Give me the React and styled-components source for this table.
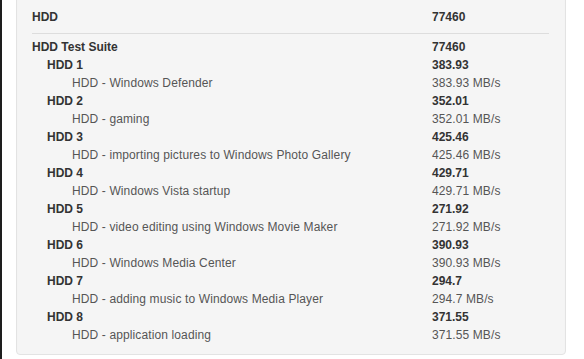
import styled, { createGlobalStyle } from 'styled-components';

const GlobalStyle = createGlobalStyle`
  html, body {
    margin: 0;
    background: #fff;
  }
  body {
    font-family: "Liberation Sans", Arial, sans-serif;
    font-size: 12px;
    color: #333;
  }
`;

const rows = [
    { name: 'HDD 1', score: '383.93', test: 'HDD - Windows Defender' },
    { name: 'HDD 2', score: '352.01', test: 'HDD - gaming' },
    { name: 'HDD 3', score: '425.46', test: 'HDD - importing pictures to Windows Photo Gallery' },
    { name: 'HDD 4', score: '429.71', test: 'HDD - Windows Vista startup' },
    { name: 'HDD 5', score: '271.92', test: 'HDD - video editing using Windows Movie Maker' },
    { name: 'HDD 6', score: '390.93', test: 'HDD - Windows Media Center' },
    { name: 'HDD 7', score: '294.7', test: 'HDD - adding music to Windows Media Player' },
    { name: 'HDD 8', score: '371.55', test: 'HDD - application loading' },
];

export default function App() {
    return (
        <Page>
            <GlobalStyle />
            <Well>
                <Results>
                    <thead>
                        <tr>
                            <Head>HDD</Head>
                            <Head>77460</Head>
                        </tr>
                    </thead>
                    <tbody>
                        <Spacer><td colSpan={2} /></Spacer>
                        <tr>
                            <Cell $level={0}>HDD Test Suite</Cell>
                            <Value $bold>77460</Value>
                        </tr>
                        {rows.map((r) => (
                            <Group key={r.name} {...r} />
                        ))}
                    </tbody>
                </Results>
            </Well>
        </Page>
    );
}

function Group({ name, score, test }) {
    return (
        <>
            <tr>
                <Cell $level={1}>{name}</Cell>
                <Value $bold>{score}</Value>
            </tr>
            <tr>
                <Cell $level={2}>{test}</Cell>
                <Value>{score} MB/s</Value>
            </tr>
        </>
    );
}

const Page = styled.div`
  border-left: 2px solid #1e1e1e;
  min-height: 359px;
  box-sizing: border-box;
  padding-left: 14px;
  overflow: hidden;
`;

const Well = styled.div`
  width: 550px;
  box-sizing: border-box;
  margin-top: -10px;
  padding: 10px 16px 10px 15px;
  background: #f5f5f5;
  border: 1px solid #e3e3e3;
  border-radius: 4px;
  box-shadow: inset 0 1px 1px rgba(0, 0, 0, 0.05);
`;

const Results = styled.table`
  width: 517px;
  border-collapse: collapse;

  td, th {
    padding: 0;
    line-height: 18px;
    text-align: left;
    vertical-align: top;
  }
`;

const Head = styled.th`
  font-weight: bold;
  color: #333;
  padding: 7px 0 7px !important;
  border-bottom: 1px solid #ddd;

  &:last-child {
    width: 117px;
  }
`;

const Spacer = styled.tr`
  td {
    height: 4px;
  }
`;

const Cell = styled.td`
  padding-left: ${(p) => [0, 15, 40][p.$level]}px !important;
  font-weight: ${(p) => (p.$level < 2 ? 'bold' : 'normal')};
  color: ${(p) => (p.$level < 2 ? '#333' : '#555')};
  letter-spacing: ${(p) => (p.$level < 2 ? '0' : '0.12px')};
`;

const Value = styled.td`
  font-weight: ${(p) => (p.$bold ? 'bold' : 'normal')};
  color: ${(p) => (p.$bold ? '#333' : '#555')};
  letter-spacing: ${(p) => (p.$bold ? '0' : '0.1px')};
`;
